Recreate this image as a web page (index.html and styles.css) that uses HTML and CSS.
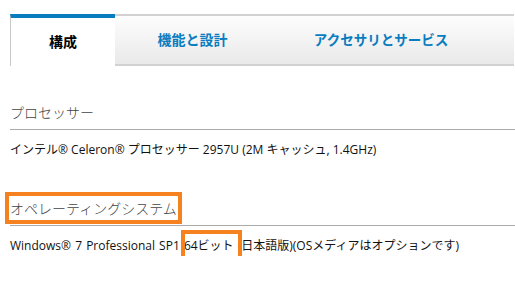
FILE: index.html
```html
<!DOCTYPE html>
<html lang="ja">
<head>
    <meta charset="UTF-8">
    <meta name="viewport" content="width=device-width, initial-scale=1.0">
    <title>構成</title>
    <link rel="stylesheet" href="styles.css">
</head>
<body>
    <div class="page">
        <nav class="tabs">
            <div class="tab tab-active">構成</div>
            <div class="tab tab-design">機能と設計</div>
            <div class="tab tab-service">アクセサリとサービス</div>
        </nav>

        <div class="spec">
            <h2 class="spec-title"><span>プロセッサー</span></h2>
            <p class="spec-value">インテル® Celeron® プロセッサー 2957U (2M キャッシュ, 1.4GHz)</p>
        </div>

        <div class="spec">
            <h2 class="spec-title"><span class="mark mark-title">オペレーティングシステム</span></h2>
            <p class="spec-value spec-os">Windows® 7 Professional SP1 <span class="mark mark-word">64ビット</span> (日本語版)(OSメディアはオプションです)</p>
        </div>
    </div>
</body>
</html>
```

FILE: styles.css
```css
body {
    margin: 0;
    background-color: #fff;
    font-family: "Noto Sans CJK JP", "DejaVu Sans", sans-serif;
    color: #111;
}
.page {
    padding: 14px 0 0 10px;
}
.tabs {
    display: flex;
    height: 52px;
}
.tab {
    display: flex;
    align-items: center;
    justify-content: center;
    box-sizing: border-box;
    padding-bottom: 2px;
    font-size: 14px;
    font-weight: bold;
    color: #0a7cc0;
    background: linear-gradient(#fdfdfd, #e9e9e9);
    border-top: 2px solid #d2d2d2;
    border-bottom: 2px solid #d2d2d2;
}
.tab-active {
    width: 105px;
    color: #000;
    background: #fff;
    border-top: 4px solid #0a7cc0;
    border-bottom: none;
    border-left: 1px solid #c8c8c8;
}
.tab-design {
    width: 155px;
}
.tab-service {
    flex: 1;
    margin-right: 1px;
    padding-right: 22px;
    font-size: 13.5px;
}
.spec-title {
    margin: 36px 0 0;
    padding-bottom: 7px;
    font-size: 14px;
    font-weight: 300;
    line-height: 20px;
    color: #444;
    border-bottom: 1px solid #ababab;
}
.spec + .spec .spec-title {
    margin-top: 38px;
}
.spec-value {
    margin: 10px 0 0;
    font-family: "Open Sans", "Noto Sans CJK JP", sans-serif;
    font-size: 12px;
    line-height: 20px;
}
.spec-os {
    word-spacing: 1px;
}
.mark {
    position: relative;
}
.mark::after {
    content: "";
    position: absolute;
    border: 4px solid #f5821f;
}
.mark-title::after {
    left: -5px;
    right: -5px;
    top: -6px;
    bottom: -6px;
}
.mark-word::after {
    left: -3px;
    right: -8px;
    top: -7px;
    bottom: -7px;
}
```
